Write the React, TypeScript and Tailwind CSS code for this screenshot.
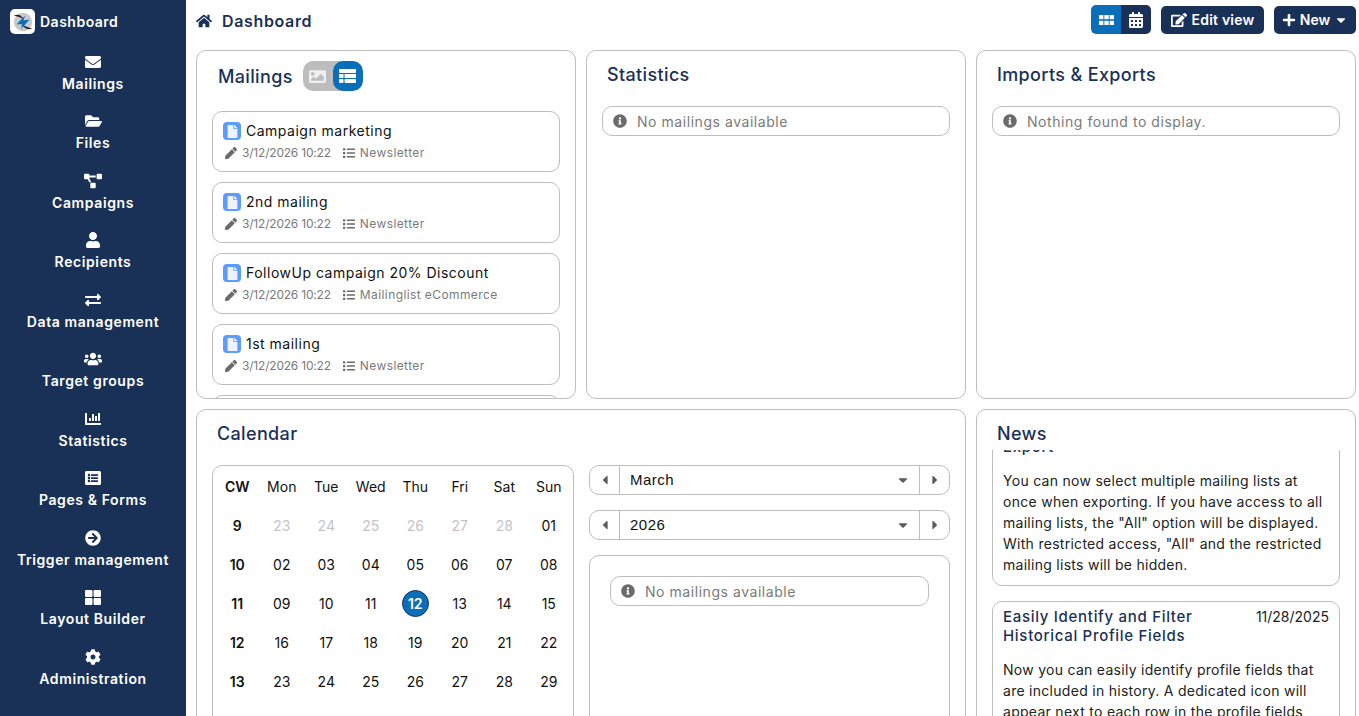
import type React from 'react'
import type {IconType} from 'react-icons'
import {
  FaArrowCircleRight,
  FaCalendarAlt,
  FaCaretDown,
  FaCaretLeft,
  FaCaretRight,
  FaChartBar,
  FaCog,
  FaEdit,
  FaEnvelope,
  FaExchangeAlt,
  FaFile,
  FaFolderOpen,
  FaHome,
  FaImage,
  FaInfoCircle,
  FaList,
  FaListAlt,
  FaPen,
  FaPlus,
  FaProjectDiagram,
  FaUser,
  FaUsers,
} from 'react-icons/fa'

// Four panes with a hairline gap, the Layout Builder glyph
const PanesIcon: React.FC<{className?: string}> = ({className}) => (
  <svg viewBox="0 0 15 14" className={className} fill="currentColor">
    <rect x="0" y="0" width="7" height="6.5" rx="1" />
    <rect x="8" y="0" width="7" height="6.5" rx="1" />
    <rect x="0" y="7.5" width="7" height="6.5" rx="1" />
    <rect x="8" y="7.5" width="7" height="6.5" rx="1" />
  </svg>
)

const NAV_ITEMS: {label: string; icon: IconType | React.FC<{className?: string}>; size: string}[] = [
  {label: 'Mailings', icon: FaEnvelope, size: 'h-[16px] w-[16px]'},
  {label: 'Files', icon: FaFolderOpen, size: 'h-[16px] w-[17px]'},
  {label: 'Campaigns', icon: FaProjectDiagram, size: 'h-[16px] w-[18px]'},
  {label: 'Recipients', icon: FaUser, size: 'h-[16px] w-[16px]'},
  {label: 'Data management', icon: FaExchangeAlt, size: 'h-[16px] w-[16px]'},
  {label: 'Target groups', icon: FaUsers, size: 'h-[16px] w-[18px]'},
  {label: 'Statistics', icon: FaChartBar, size: 'h-[16px] w-[16px]'},
  {label: 'Pages & Forms', icon: FaListAlt, size: 'h-[16px] w-[16px]'},
  {label: 'Trigger management', icon: FaArrowCircleRight, size: 'h-[16px] w-[16px]'},
  {label: 'Layout Builder', icon: PanesIcon, size: 'h-[15px] w-[16px]'},
  {label: 'Administration', icon: FaCog, size: 'h-[16px] w-[16px]'},
]

const MAILINGS = [
  {name: 'Campaign marketing', list: 'Newsletter'},
  {name: '2nd mailing', list: 'Newsletter'},
  {name: 'FollowUp campaign 20% Discount', list: 'Mailinglist eCommerce'},
  {name: '1st mailing', list: 'Newsletter'},
]

const WEEKS = [
  {cw: '9', days: ['23', '24', '25', '26', '27', '28', '01']},
  {cw: '10', days: ['02', '03', '04', '05', '06', '07', '08']},
  {cw: '11', days: ['09', '10', '11', '12', '13', '14', '15']},
  {cw: '12', days: ['16', '17', '18', '19', '20', '21', '22']},
  {cw: '13', days: ['23', '24', '25', '26', '27', '28', '29']},
]

const Logo: React.FC = () => (
  <div className="flex h-[25px] w-[25px] items-center justify-center rounded-[5px] bg-white">
    <svg viewBox="0 0 24 24" className="h-[22px] w-[22px]">
      <circle cx="12" cy="12" r="10" fill="#c9c9c9" />
      <path d="M14.5 5L12.5 10L19 9.5L15 14L10 19.5L11 14.5L5 14.5Z" fill="#0a6fb8" />
      <path d="M2 5c5-2 9 0 10 4-2-2-6-3-10-4z" fill="#222" />
      <path d="M22 19c-5 2-9 0-10-4 2 2 6 3 10 4z" fill="#222" />
    </svg>
  </div>
)

const Sidebar: React.FC = () => (
  <aside className="flex h-full w-[186px] shrink-0 flex-col bg-[#1a3157] text-white">
    <div className="flex h-[43px] items-center gap-[5px] pl-[10px]">
      <Logo />
      <span className="text-[14px] font-semibold tracking-[0.5px]">Dashboard</span>
    </div>
    <nav className="flex flex-col pt-[6.75px]">
      {NAV_ITEMS.map((item) => (
        <div key={item.label} className="flex h-[59.5px] flex-col items-center pt-[4px]">
          <div className="flex h-[16px] items-center">
            <item.icon className={item.size} />
          </div>
          <span className="mt-[3px] text-[14px] leading-[21px] font-semibold tracking-[0.6px]">{item.label}</span>
        </div>
      ))}
    </nav>
  </aside>
)

const Card: React.FC<{className?: string; children: React.ReactNode}> = ({className, children}) => (
  <section className={`overflow-hidden rounded-[10px] border border-[#bdbdbd] bg-white ${className ?? ''}`}>
    {children}
  </section>
)

const Notice: React.FC<{text: string}> = ({text}) => (
  <div className="flex h-[30px] items-center gap-[10px] rounded-[10px] border border-[#bdbdbd] pl-[10px] text-[14px] tracking-[0.55px] text-[#7a7a7a]">
    <FaInfoCircle className="h-[14px] w-[14px] text-[#6b6b6b]" />
    {text}
  </div>
)

const MailingRow: React.FC<{name: string; list: string}> = ({name, list}) => (
  <div className="h-[61px] shrink-0 rounded-[10px] border border-[#bdbdbd] px-[10px] pt-[9px]">
    <div className="flex items-center gap-[5px]">
      <span className="flex h-[18px] w-[18px] items-center justify-center rounded-[4px] bg-[#5b9dff]">
        <FaFile className="h-[13px] w-[13px] text-[#eef3ff]" />
      </span>
      <span className="text-[14px] leading-[20px] tracking-[0.5px] text-[#111111]">{name}</span>
    </div>
    <div className="mt-[3px] flex items-center text-[12px] leading-[18px] text-[#7a7a7a]">
      <FaPen className="ml-[2px] h-[12px] w-[12px] text-[#6b6b6b]" />
      <span className="ml-[5px] tracking-[-0.2px]">3/12/2026 10:22</span>
      <FaList className="ml-[12px] h-[12px] w-[12px] text-[#6b6b6b]" />
      <span className="ml-[5px] tracking-[0.4px]">{list}</span>
    </div>
  </div>
)

const Stepper: React.FC<{value: string}> = ({value}) => (
  <div className="flex h-[30px] items-center rounded-[10px] border border-[#bdbdbd] text-[#111111]">
    <span className="flex h-full w-[30px] items-center justify-center border-r border-[#bdbdbd]">
      <FaCaretLeft className="h-[14px] w-[14px] text-[#5f5a58]" />
    </span>
    <span className="flex-1 pl-[10px] font-['Liberation_Sans',sans-serif] text-[15px] tracking-[0.5px]">{value}</span>
    <FaCaretDown className="mr-[9px] h-[14px] w-[14px] text-[#5f5a58]" />
    <span className="flex h-full w-[30px] items-center justify-center border-l border-[#bdbdbd]">
      <FaCaretRight className="h-[14px] w-[14px] text-[#5f5a58]" />
    </span>
  </div>
)

const CalendarTable: React.FC = () => (
  <div className="h-[300px] w-[362px] shrink-0 rounded-[10px] border border-[#bdbdbd] px-[2px] pt-[1px]">
    <div className="grid grid-cols-8 text-center text-[14px] text-[#111111]">
      <div className="flex h-[39px] items-center justify-center font-semibold">CW</div>
      {['Mon', 'Tue', 'Wed', 'Thu', 'Fri', 'Sat', 'Sun'].map((day) => (
        <div key={day} className="flex h-[39px] items-center justify-center">
          {day}
        </div>
      ))}
      {WEEKS.map((week, w) => (
        <div key={week.cw} className="contents">
          <div className="flex h-[39px] items-center justify-center font-semibold">{week.cw}</div>
          {week.days.map((day, d) => (
            <div key={d} className="flex h-[39px] items-center justify-center">
              {w === 2 && d === 3 ? (
                <span className="flex h-[27px] w-[27px] items-center justify-center rounded-full border border-[#1a3157] bg-[#0a6fb8] font-semibold text-white">
                  {day}
                </span>
              ) : (
                <span className={w === 0 && d < 6 ? 'text-[#c4c4c4]' : ''}>{day}</span>
              )}
            </div>
          ))}
        </div>
      ))}
    </div>
  </div>
)

const CardTitle: React.FC<{children: React.ReactNode}> = ({children}) => (
  <h2 className="text-[18px] leading-[27px] font-medium tracking-[0.35px] text-[#1a3157]">{children}</h2>
)

export default function App() {
  return (
    <div className="flex h-screen overflow-hidden bg-white font-['Inter',sans-serif]">
      <Sidebar />
      <main className="min-w-0 flex-1 pr-[3px] pl-[10px]">
        <header className="flex h-[50px] items-start justify-between">
          <div className="flex h-[42px] items-center text-[#1a3157]">
            <FaHome className="h-[16px] w-[16px]" />
            <span className="ml-[10px] text-[16px] font-semibold tracking-[0.65px]">Dashboard</span>
          </div>
          <div className="flex items-center gap-[10px] pt-[5px]">
            <div className="flex h-[29px] overflow-hidden rounded-[5px] text-white">
              <span className="flex w-[30px] items-center justify-center bg-[#0a6fb8]">
                <svg viewBox="0 0 15 10" className="h-[10px] w-[15px]" fill="currentColor">
                  <rect x="0" y="0" width="4.4" height="4.2" />
                  <rect x="5.3" y="0" width="4.4" height="4.2" />
                  <rect x="10.6" y="0" width="4.4" height="4.2" />
                  <rect x="0" y="5.8" width="4.4" height="4.2" />
                  <rect x="5.3" y="5.8" width="4.4" height="4.2" />
                  <rect x="10.6" y="5.8" width="4.4" height="4.2" />
                </svg>
              </span>
              <span className="flex w-[30px] items-center justify-center bg-[#1a3157]">
                <FaCalendarAlt className="h-[16px] w-[16px]" />
              </span>
            </div>
            <button className="flex h-[28px] w-[103px] items-center justify-center gap-[5px] rounded-[5px] bg-[#1a3157] text-[14px] font-semibold tracking-[0.2px] text-white">
              <FaEdit className="h-[16px] w-[16px]" />
              Edit view
            </button>
            <button className="flex h-[28px] w-[82px] items-center justify-center gap-[4px] rounded-[5px] bg-[#1a3157] text-[14px] font-semibold text-white">
              <FaPlus className="h-[14px] w-[14px]" />
              New
              <FaCaretDown className="h-[14px] w-[14px]" />
            </button>
          </div>
        </header>

        <div className="grid grid-cols-3 grid-rows-[349px_400px] gap-[10px]">
          <Card className="px-[15px]">
            <div className="mb-[10px] flex h-[50px] items-center gap-[10px] pl-[6px]">
              <CardTitle>Mailings</CardTitle>
              <div className="flex h-[30px] overflow-hidden rounded-[10px] bg-[#bdbdbd] text-white">
                <span className="flex w-[30px] items-center justify-center">
                  <FaImage className="h-[17px] w-[17px] text-[#efefef]" />
                </span>
                <span className="flex w-[30px] items-center justify-center rounded-[10px] bg-[#0a6fb8]">
                  <svg viewBox="0 0 17 14" className="h-[14px] w-[17px]" fill="currentColor">
                    <rect x="0" y="0" width="17" height="4" rx="1" />
                    <rect x="0" y="5" width="4.5" height="4" />
                    <rect x="5.5" y="5" width="11.5" height="4" />
                    <rect x="0" y="10" width="4.5" height="4" rx="1" />
                    <rect x="5.5" y="10" width="11.5" height="4" rx="1" />
                  </svg>
                </span>
              </div>
            </div>
            <div className="flex flex-col gap-[10px]">
              {MAILINGS.map((mailing) => (
                <MailingRow key={mailing.name} name={mailing.name} list={mailing.list} />
              ))}
              <div className="h-[61px] shrink-0 rounded-[10px] border border-[#bdbdbd]" />
            </div>
          </Card>

          <Card className="px-[15px]">
            <div className="pt-[10px] pb-[18px] pl-[5px]">
              <CardTitle>Statistics</CardTitle>
            </div>
            <Notice text="No mailings available" />
          </Card>

          <Card className="px-[15px]">
            <div className="pt-[10px] pb-[18px] pl-[5px]">
              <CardTitle>Imports &amp; Exports</CardTitle>
            </div>
            <Notice text="Nothing found to display." />
          </Card>

          <Card className="col-span-2 px-[15px]">
            <div className="pt-[10px] pb-[18px] pl-[5px]">
              <CardTitle>Calendar</CardTitle>
            </div>
            <div className="flex gap-[15px]">
              <CalendarTable />
              <div className="flex min-w-0 flex-1 flex-col gap-[15px]">
                <Stepper value="March" />
                <Stepper value="2026" />
                <div className="h-[300px] rounded-[10px] border border-[#bdbdbd] px-[20px] pt-[20px]">
                  <Notice text="No mailings available" />
                </div>
              </div>
            </div>
          </Card>

          <Card className="px-[15px]">
            <div className="h-[40px] pt-[10px] pl-[5px]">
              <CardTitle>News</CardTitle>
            </div>
            <div className="h-[300px] overflow-hidden">
              <div className="-mt-[14px] rounded-[10px] border border-[#bdbdbd] px-[10px] pb-[10px]">
                <h3 className="text-[15px] leading-[19px] font-medium tracking-[0.7px] text-[#1a3157]">Export</h3>
                <p className="mt-[14px] text-[14px] leading-[21px] tracking-[0.28px] text-[#222222]">
                  You can now select multiple mailing lists at once when exporting. If you have access to all mailing
                  lists, the "All" option will be displayed. With restricted access, "All" and the restricted mailing
                  lists will be hidden.
                </p>
              </div>
              <div className="mt-[15px] rounded-[10px] border border-[#bdbdbd] px-[10px] py-[5px]">
                <div className="flex items-start justify-between">
                  <h3 className="w-[215px] text-[15px] leading-[19px] font-medium tracking-[0.7px] text-[#1a3157]">
                    Easily Identify and Filter Historical Profile Fields
                  </h3>
                  <span className="text-[14px] leading-[19px] text-[#222222]">11/28/2025</span>
                </div>
                <p className="mt-[14px] text-[14px] leading-[21px] tracking-[0.28px] text-[#222222]">
                  Now you can easily identify profile fields that are included in history. A dedicated icon will appear
                  next to each row in the profile fields
                </p>
              </div>
            </div>
          </Card>
        </div>
      </main>
    </div>
  )
}
